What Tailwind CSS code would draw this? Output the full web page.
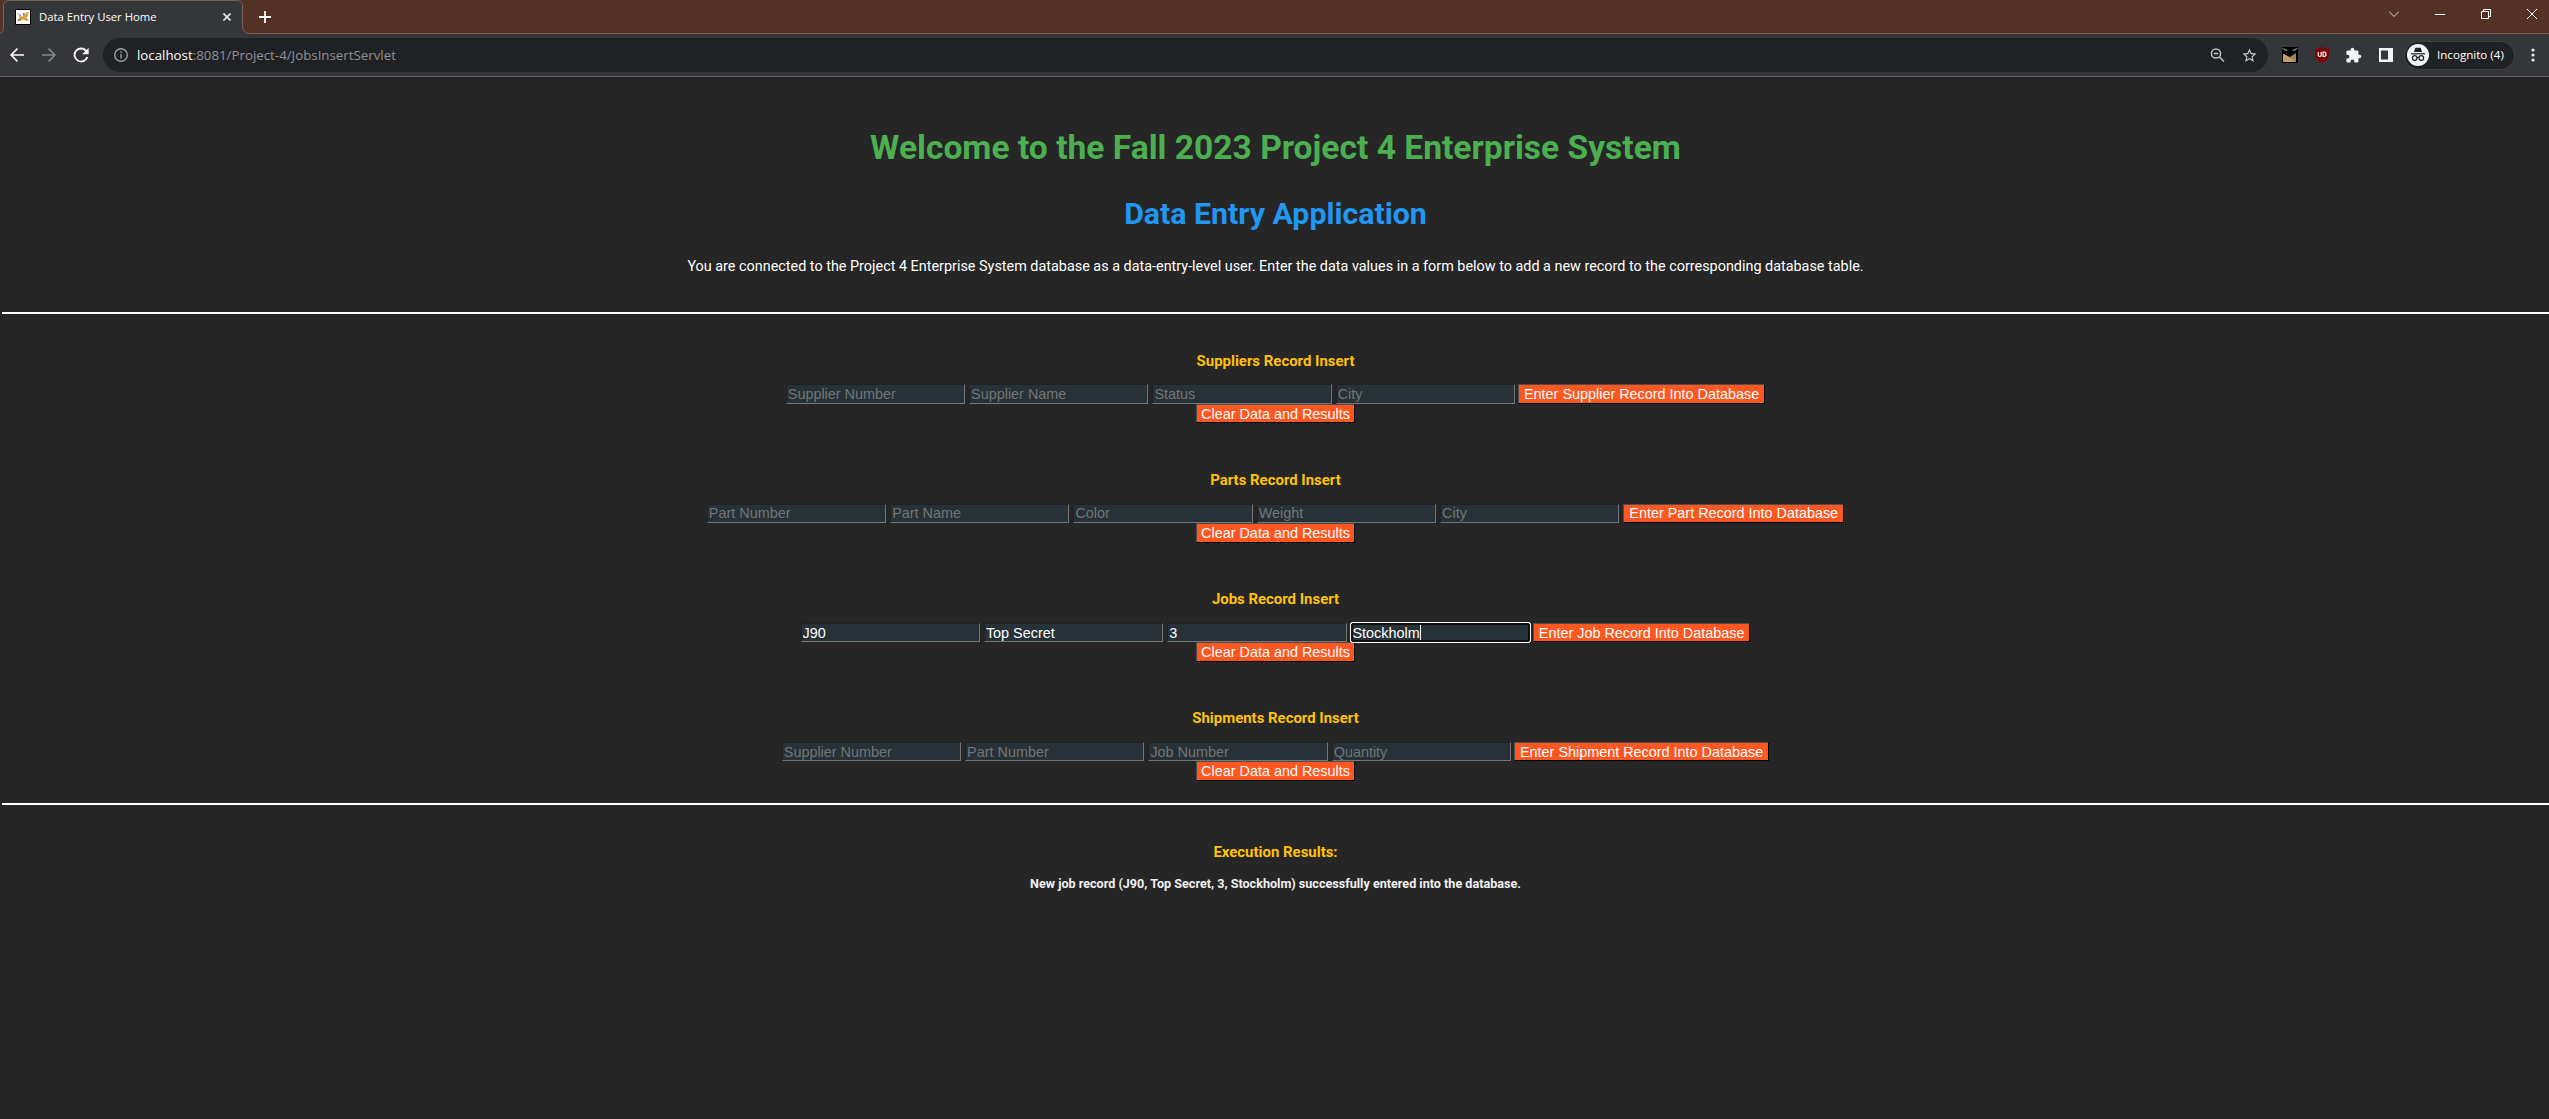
<!DOCTYPE html>
<html lang="en">
<head>
<meta charset="utf-8">
<title>Data Entry User Home</title>
<script src="https://cdn.jsdelivr.net/npm/@tailwindcss/browser@4"></script>
</head>
<body class="flex h-[1119px] w-[2549px] flex-col overflow-hidden bg-[#262626] font-['Roboto',sans-serif] text-white">
  <!-- Tab strip -->
  <header class="flex h-[34px] shrink-0 bg-[#533124] font-['Open_Sans',sans-serif] shadow-[inset_0_-1px_#7b6055]">
    <div class="relative flex h-[34px] w-[243px] items-center">
      <svg class="absolute inset-0" width="252" height="34" viewBox="0 0 252 34"><path d="M-1 34V33.500C2 33.500 3.500 31 3.500 27V6Q3.500 .5 9 .5H236.500Q242.500 .5 242.500 6V26Q242.500 33.500 250 33.500V34Z" fill="#35363a"/><path d="M-1 33.500C2 33.500 3.500 31 3.500 27V6Q3.500 .5 9 .5H236.500Q242.500 .5 242.500 6V26Q242.500 33.500 250 33.500" fill="none" stroke="#7b6055"/></svg>
      <svg class="relative ml-[15px] shrink-0" width="16" height="16" viewBox="0 0 16 16"><path d="M.5 .5h15v15H.5z" fill="#fff" stroke="#000"/><path d="M2 12L4.500 8 8 7 8.500 4 10 5 12 3 13.500 3 13 7 11.500 9 14 11 12 12 8 10.500 5 12Z" fill="#d7a34b"/><path d="M3 5l3 1.500-2 1M3 12l3-2M8 4l1 2" fill="none" stroke="#70604c" stroke-width=".8"/></svg>
      <span class="relative ml-2 w-[184px] text-[11.300px] leading-4">Data Entry User Home</span>
      <svg class="relative shrink-0" width="8" height="8" viewBox="0 0 8 8" stroke="#e8eaed" stroke-width="1.600"><path d="M.5 .5l7 7M7.500 .5l-7 7"/></svg>
    </div>
    <svg class="ml-4 mt-[11px]" width="12" height="12" viewBox="0 0 12 12" stroke="#fff" stroke-width="1.800"><path d="M6 0v12M0 6h12"/></svg>
    <div class="ml-auto mr-3 mt-[9px] flex h-[10px] gap-9">
      <svg width="10" height="10" viewBox="0 0 10 10" fill="none" stroke="#ddd3cf"><path d="M0 2.500l5 5 5-5"/></svg>
      <svg width="10" height="10" viewBox="0 0 10 10" stroke="#fff"><path d="M0 5.500h10"/></svg>
      <svg width="10" height="10" viewBox="0 0 10 10" fill="none" stroke="#fff"><path d="M.5 2.500h7v7h-7zM2.500 2.500v-2h7v7h-2"/></svg>
      <svg width="10" height="10" viewBox="0 0 10 10" stroke="#fff"><path d="M0 0l10 10M10 0L0 10"/></svg>
    </div>
  </header>

  <!-- Toolbar -->
  <nav class="flex h-[43px] shrink-0 items-center border-b border-[#606165] bg-[#35363a] pl-[7px] font-['Open_Sans',sans-serif]">
    <svg width="20" height="20" viewBox="0 0 24 24" fill="#fff"><path d="M20.500 11H7.200l6-6-1.400-1.400L3.500 12l8.300 8.400 1.400-1.400-6-6h13.300z"/></svg>
    <svg class="ml-3" width="20" height="20" viewBox="0 0 24 24" fill="#85868a"><path d="M3.500 11h13.300l-6-6 1.400-1.400 8.300 8.400-8.300 8.400-1.400-1.400 6-6H3.500z"/></svg>
    <svg class="ml-3" width="20" height="20" viewBox="0 0 22 22" fill="#fff"><path d="M17.200 5.400A8.200 8.200 0 1 0 19 13.200h-2.200a6.100 6.100 0 1 1-1.200-6.200L12.300 10.200H19.400V3z"/></svg>
    <div class="ml-3 flex h-[34px] w-[2165px] items-center rounded-full bg-[#202124] pl-[11px] pr-[10px]">
      <svg width="14" height="14" viewBox="0 0 14 14" fill="none" stroke="#9aa0a6" stroke-width="1.400"><circle cx="7" cy="7" r="6.300"/><path d="M7 6v4.500M7 3.300v1.500"/></svg>
      <span class="ml-[9px] text-[13.300px] leading-5 text-[#8f9296]"><span class="text-white">localhost</span>:8081/Project-4/JobsInsertServlet</span>
      <svg class="ml-auto" width="16" height="16" viewBox="0 0 16 16" fill="none" stroke="#bdc1c6" stroke-width="1.500"><circle cx="7" cy="6.500" r="4.600"/><path d="M10.500 10l4.500 4.500M4.800 6.500h4.400"/></svg>
      <svg class="ml-4" width="17" height="17" viewBox="0 0 24 24" fill="#c7cace"><path d="M22 9.240l-7.190-.62L12 2 9.190 8.630 2 9.240l5.460 4.730L5.820 21 12 17.270 18.180 21l-1.630-7.030L22 9.240zM12 15.400l-3.760 2.270 1-4.280-3.320-2.880 4.380-.38L12 6.100l1.710 4.040 4.380.38-3.320 2.880 1 4.280L12 15.400z"/></svg>
    </div>
    <svg class="ml-[14px]" width="16" height="16" viewBox="0 0 16 16"><path d="M0 0h16v16H0z" fill="#000"/><path d="M1 7l7 3 6-4v9H1z" fill="#a3835a"/><path d="M2 7l12 8H1V7z" fill="#c29c6b"/><path d="M0 1q2 3 6 3Q5 2 0 1zM16 1q-2 3-6 3Q11 2 16 1z" fill="#888"/></svg>
    <svg class="ml-[17px]" width="14" height="16" viewBox="0 0 14 16"><path d="M7 0Q10 2 14 2V7Q14 13 7 16 0 13 0 7V2Q4 2 7 0Z" fill="#800000"/><path d="M3.200 5v3q0 1.500 1.500 1.500T6.200 8V5M8 5v4.500h1q2 0 2-2.200T9 5z" fill="none" stroke="#fff" stroke-width="1.200"/></svg>
    <svg class="ml-4" width="17" height="17" viewBox="0 0 24 24" fill="#f1f3f4"><path d="M20.500 11H19V7c0-1.100-.9-2-2-2h-4V3.500a2.500 2.500 0 0 0-5 0V5H4c-1.100 0-2 .9-2 2v3.800h1.500a2.700 2.700 0 0 1 0 5.400H2V20c0 1.100.9 2 2 2h3.800v-1.500a2.700 2.700 0 0 1 5.400 0V22H17c1.100 0 2-.9 2-2v-4h1.500a2.500 2.500 0 0 0 0-5z"/></svg>
    <svg class="ml-[17px]" width="14" height="14" viewBox="0 0 14 14"><path d="M0 0h14v14H0z" fill="#f1f3f4"/><path d="M2 2.500h7v9H2z" fill="#35363a"/></svg>
    <div class="ml-3 flex h-[27px] w-[109px] items-center rounded-full bg-[#202124] pl-[2px] ring-1 ring-[#404145]">
      <svg width="22" height="22" viewBox="0 0 22 22"><circle cx="11" cy="11" r="11" fill="#f1f3f4"/><path d="M7 8l1.200-4 1.300-.5 1.500.5 1.500-.5 1.300.5L15 8z" fill="#202124"/><path d="M4 9.800h14" stroke="#202124" stroke-width="1.200"/><g fill="none" stroke="#202124" stroke-width="1.200"><circle cx="7.700" cy="14" r="2.300"/><circle cx="14.300" cy="14" r="2.300"/><path d="M10 13.700q1-.6 2 0"/></g></svg>
      <span class="ml-2 whitespace-nowrap text-[11.600px] leading-4">Incognito (4)</span>
    </div>
    <svg class="ml-[17px]" width="4" height="14" viewBox="0 0 4 14" fill="#e8eaed"><circle cx="2" cy="2" r="1.600"/><circle cx="2" cy="7" r="1.600"/><circle cx="2" cy="12" r="1.600"/></svg>
  </nav>

  <!-- Page -->
  <main class="flex flex-col items-center pl-[2px] pt-[51px]">
    <h1 class="text-[33.600px] font-bold leading-10 text-[#4caf50]">Welcome to the Fall 2023 Project 4 Enterprise System</h1>
    <h2 class="mt-7 text-[30.300px] font-bold leading-9 text-[#2196f3]">Data Entry Application</h2>
    <p class="mt-[26px] text-[14.400px] leading-[18px]">You are connected to the Project 4 Enterprise System database as a data-entry-level user. Enter the data values in a form below to add a new record to the corresponding database table.</p>
    <div class="-ml-px mt-[36px] h-[2px] w-full bg-white"></div>

    <form class="mt-[38px] flex h-[119px] flex-col items-center font-['Liberation_Sans',sans-serif] text-[14.400px] leading-4">
      <h3 class="font-['Roboto',sans-serif] text-[14.950px] font-bold leading-[18px] text-[#ffc107]">Suppliers Record Insert</h3>
      <div class="mt-[14px] flex h-5 gap-1">
        <input class="w-[179.300px] border border-b-[#767676] border-l-[#1f2224] border-r-[#767676] border-t-[#1f2224] bg-[#263238] px-px placeholder:text-[#757575]" placeholder="Supplier Number">
        <input class="w-[179.300px] border border-b-[#767676] border-l-[#1f2224] border-r-[#767676] border-t-[#1f2224] bg-[#263238] px-px placeholder:text-[#757575]" placeholder="Supplier Name">
        <input class="w-[179.300px] border border-b-[#767676] border-l-[#1f2224] border-r-[#767676] border-t-[#1f2224] bg-[#263238] px-px placeholder:text-[#757575]" placeholder="Status">
        <input class="w-[179.300px] border border-b-[#767676] border-l-[#1f2224] border-r-[#767676] border-t-[#1f2224] bg-[#263238] px-px placeholder:text-[#757575]" placeholder="City">
        <button type="button" class="-ml-px border border-b-black border-l-[#4d4d4d] border-r-black border-t-[#4d4d4d] bg-[#ff5722] px-[5px]">Enter Supplier Record Into Database</button>
      </div>
      <button type="button" class="h-[19px] border border-b-black border-l-[#4d4d4d] border-r-black border-t-[#4d4d4d] bg-[#ff5722] px-1">Clear Data and Results</button>
    </form>

    <form class="flex h-[119px] flex-col items-center font-['Liberation_Sans',sans-serif] text-[14.400px] leading-4">
      <h3 class="font-['Roboto',sans-serif] text-[14.950px] font-bold leading-[18px] text-[#ffc107]">Parts Record Insert</h3>
      <div class="mt-[15px] flex h-[19px] gap-1">
        <input class="w-[179.300px] border border-b-[#767676] border-l-[#1f2224] border-r-[#767676] border-t-[#1f2224] bg-[#263238] px-px pb-[2px] placeholder:text-[#757575]" placeholder="Part Number">
        <input class="w-[179.300px] border border-b-[#767676] border-l-[#1f2224] border-r-[#767676] border-t-[#1f2224] bg-[#263238] px-px pb-[2px] placeholder:text-[#757575]" placeholder="Part Name">
        <input class="w-[179.300px] border border-b-[#767676] border-l-[#1f2224] border-r-[#767676] border-t-[#1f2224] bg-[#263238] px-px pb-[2px] placeholder:text-[#757575]" placeholder="Color">
        <input class="w-[179.300px] border border-b-[#767676] border-l-[#1f2224] border-r-[#767676] border-t-[#1f2224] bg-[#263238] px-px pb-[2px] placeholder:text-[#757575]" placeholder="Weight">
        <input class="w-[179.300px] border border-b-[#767676] border-l-[#1f2224] border-r-[#767676] border-t-[#1f2224] bg-[#263238] px-px pb-[2px] placeholder:text-[#757575]" placeholder="City">
        <button type="button" class="border border-b-black border-l-[#4d4d4d] border-r-black border-t-[#4d4d4d] bg-[#ff5722] px-[5px] pb-[2px]">Enter Part Record Into Database</button>
      </div>
      <button type="button" class="h-5 border border-b-black border-l-[#4d4d4d] border-r-black border-t-[#4d4d4d] bg-[#ff5722] px-1">Clear Data and Results</button>
    </form>

    <form class="flex h-[119px] flex-col items-center font-['Liberation_Sans',sans-serif] text-[14.400px] leading-4">
      <h3 class="font-['Roboto',sans-serif] text-[14.950px] font-bold leading-[18px] text-[#ffc107]">Jobs Record Insert</h3>
      <div class="mt-[15px] flex h-[19px] gap-1">
        <input class="w-[179.300px] border border-b-[#767676] border-l-[#1f2224] border-r-[#767676] border-t-[#1f2224] bg-[#263238] px-px" value="J90">
        <input class="w-[179.300px] border border-b-[#767676] border-l-[#1f2224] border-r-[#767676] border-t-[#1f2224] bg-[#263238] px-px" value="Top Secret">
        <input class="w-[179.300px] border border-b-[#767676] border-l-[#1f2224] border-r-[#767676] border-t-[#1f2224] bg-[#263238] px-px" value="3">
        <div class="relative z-10 flex w-[179.300px] items-center rounded-[2px] border border-[#101010] bg-[#263238] px-px shadow-[inset_0_0_0_1px_#101010,0_0_0_1px_#ffffff]"><span class="relative">Stockholm</span><span class="relative h-[15px] w-px bg-white"></span></div>
        <button type="button" class="-ml-px border border-b-black border-l-[#4d4d4d] border-r-black border-t-[#4d4d4d] bg-[#ff5722] px-[5px]">Enter Job Record Into Database</button>
      </div>
      <button type="button" class="h-5 border border-b-black border-l-[#4d4d4d] border-r-black border-t-[#4d4d4d] bg-[#ff5722] px-1">Clear Data and Results</button>
    </form>

    <form class="flex h-[94px] flex-col items-center font-['Liberation_Sans',sans-serif] text-[14.400px] leading-4">
      <h3 class="font-['Roboto',sans-serif] text-[14.950px] font-bold leading-[18px] text-[#ffc107]">Shipments Record Insert</h3>
      <div class="mt-[15px] flex h-[19px] gap-1">
        <input class="w-[179.300px] border border-b-[#767676] border-l-[#1f2224] border-r-[#767676] border-t-[#1f2224] bg-[#263238] px-px placeholder:text-[#757575]" placeholder="Supplier Number">
        <input class="w-[179.300px] border border-b-[#767676] border-l-[#1f2224] border-r-[#767676] border-t-[#1f2224] bg-[#263238] px-px placeholder:text-[#757575]" placeholder="Part Number">
        <input class="w-[179.300px] border border-b-[#767676] border-l-[#1f2224] border-r-[#767676] border-t-[#1f2224] bg-[#263238] px-px placeholder:text-[#757575]" placeholder="Job Number">
        <input class="w-[179.300px] border border-b-[#767676] border-l-[#1f2224] border-r-[#767676] border-t-[#1f2224] bg-[#263238] px-px placeholder:text-[#757575]" placeholder="Quantity">
        <button type="button" class="-ml-px border border-b-black border-l-[#4d4d4d] border-r-black border-t-[#4d4d4d] bg-[#ff5722] px-[5px]">Enter Shipment Record Into Database</button>
      </div>
      <button type="button" class="h-5 border border-b-black border-l-[#4d4d4d] border-r-black border-t-[#4d4d4d] bg-[#ff5722] px-1">Clear Data and Results</button>
    </form>

    <div class="-ml-px h-[2px] w-full bg-white"></div>
    <h3 class="mt-[38px] text-[14.950px] font-bold leading-[18px] text-[#ffc107]">Execution Results:</h3>
    <p class="mt-[15px] text-[12.600px] font-bold leading-4 text-[#f0f0f0]">New job record (J90, Top Secret, 3, Stockholm) successfully entered into the database.</p>
  </main>
</body>
</html>
